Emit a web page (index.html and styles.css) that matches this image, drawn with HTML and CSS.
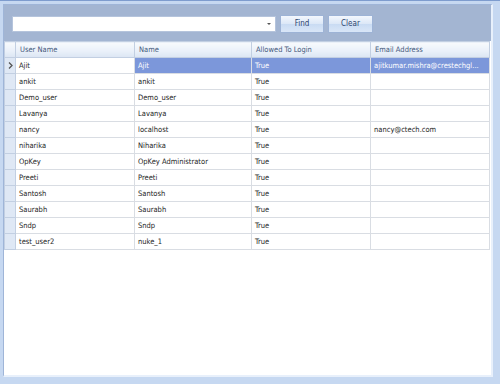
FILE: index.html
```html
<!DOCTYPE html>
<html lang="en">

<head>
    <meta charset="UTF-8">
    <meta name="viewport" content="width=device-width, initial-scale=1.0">
    <title>Users</title>
    <link rel="stylesheet" href="styles.css">
</head>

<body>
    <div class="window">
        <div class="panel">
            <div class="toolbar">
                <div class="combo">
                    <span class="combo_text"></span>
                    <span class="combo_arrow"></span>
                </div>
                <button class="btn btn_find">Find</button>
                <button class="btn btn_clear">Clear</button>
            </div>

            <div class="grid">
                <table class="users">
                    <colgroup>
                        <col class="c_head">
                        <col class="c_user">
                        <col class="c_name">
                        <col class="c_login">
                        <col class="c_mail">
                    </colgroup>
                    <thead>
                        <tr>
                            <th class="rowhead"></th>
                            <th>User Name</th>
                            <th>Name</th>
                            <th>Allowed To Login</th>
                            <th>Email Address</th>
                        </tr>
                    </thead>
                    <tbody>
                        <tr class="on">
                            <td class="rowhead">
                                <svg width="5" height="7" viewBox="0 0 5 7"><path d="M1 0.5 L4 3.5 L1 6.5" fill="none" stroke="#555" stroke-width="1.3"/></svg>
                            </td>
                            <td class="focus">Ajit</td>
                            <td>Ajit</td>
                            <td>True</td>
                            <td>ajitkumar.mishra@crestechgl...</td>
                        </tr>
                        <tr><td class="rowhead"></td><td>ankit</td><td>ankit</td><td>True</td><td></td></tr>
                        <tr><td class="rowhead"></td><td>Demo_user</td><td>Demo_user</td><td>True</td><td></td></tr>
                        <tr><td class="rowhead"></td><td>Lavanya</td><td>Lavanya</td><td>True</td><td></td></tr>
                        <tr><td class="rowhead"></td><td>nancy</td><td>localhost</td><td>True</td><td>nancy@ctech.com</td></tr>
                        <tr><td class="rowhead"></td><td>niharika</td><td>Niharika</td><td>True</td><td></td></tr>
                        <tr><td class="rowhead"></td><td>OpKey</td><td>OpKey Administrator</td><td>True</td><td></td></tr>
                        <tr><td class="rowhead"></td><td>Preeti</td><td>Preeti</td><td>True</td><td></td></tr>
                        <tr><td class="rowhead"></td><td>Santosh</td><td>Santosh</td><td>True</td><td></td></tr>
                        <tr><td class="rowhead"></td><td>Saurabh</td><td>Saurabh</td><td>True</td><td></td></tr>
                        <tr><td class="rowhead"></td><td>Sndp</td><td>Sndp</td><td>True</td><td></td></tr>
                        <tr><td class="rowhead"></td><td>test_user2</td><td>nuke_1</td><td>True</td><td></td></tr>
                    </tbody>
                </table>
            </div>
        </div>
    </div>
</body>

</html>
```

FILE: styles.css
```css
* {
    margin: 0;
    padding: 0;
    box-sizing: border-box;
}

body {
    font-family: "DejaVu Sans Condensed", "Liberation Sans", sans-serif;
    font-size: 7.5px;
    color: #1e1e1e;
    background-color: #c8d9f0;
}

.window {
    width: 500px;
    height: 384px;
    padding: 3px 7px 7px 3px;
    background-color: #c6d8f1;
    border-top: 1px solid #7e9cce;
}

.panel {
    display: flex;
    flex-direction: column;
    height: 100%;
    border: 1px solid #9fb5d8;
    border-right: 2px solid #e8f0fb;
    border-bottom: 2px solid #e8f0fb;
    background-color: #fff;
}

.toolbar {
    display: flex;
    align-items: center;
    gap: 4px;
    height: 36px;
    padding: 1px 0 0 8px;
    background-color: #a3b5d2;
}

.combo {
    display: flex;
    align-items: center;
    justify-content: flex-end;
    width: 264px;
    height: 16px;
    background-color: #fff;
    border: 1px solid #b5c4dc;
    padding-right: 4px;
}

.combo_arrow {
    width: 0;
    height: 0;
    border-left: 2px solid transparent;
    border-right: 2px solid transparent;
    border-top: 2px solid #555;
}

.btn {
    width: 44px;
    height: 18px;
    font-family: inherit;
    font-size: 8px;
    color: #2d456f;
    border: 1px solid #9db3d6;
    border-radius: 1px;
    background: linear-gradient(#f3f7fd, #dbe7f7 50%, #c9dbf3 51%, #d9e6f7);
}

.btn_clear {
    width: 45px;
}

.grid {
    flex: 1;
    background-color: #fff;
}

.users {
    width: 485px;
    border-collapse: collapse;
    table-layout: fixed;
}

.c_head {
    width: 11px;
}

.c_user {
    width: 119px;
}

.c_name {
    width: 117px;
}

.c_login,
.c_mail {
    width: 119px;
}

.users th,
.users td {
    height: 16px;
    padding: 0 3px;
    text-align: left;
    white-space: nowrap;
    overflow: hidden;
    border: 1px solid #d9dde3;
}

.users th {
    font-weight: normal;
    color: #45597c;
    padding-left: 4px;
    border-color: #c2cfe2;
    background: linear-gradient(#f8fafd, #e9f0f9 60%, #dbe5f3);
}

.users .rowhead {
    padding: 0;
    border-color: #c2cfe2;
    background-color: #dfe8f5;
}

.users td.rowhead svg {
    display: block;
    margin-left: 3px;
}

.users tr.on td {
    background-color: #7c97da;
    color: #fff;
}

.users tr.on td.rowhead {
    background-color: #dfe8f5;
}

.users tr.on td.focus {
    background-color: #fff;
    color: #1e1e1e;
}
```
